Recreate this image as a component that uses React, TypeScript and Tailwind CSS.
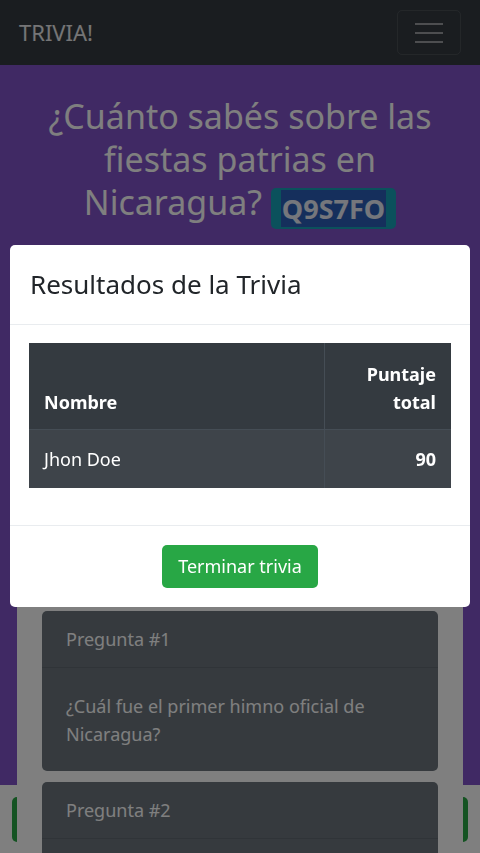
const font = { fontFamily: '"Noto Sans", "Open Sans", sans-serif' };

export default function App() {
  return (
    <div className="relative min-h-[853px] bg-white overflow-hidden" style={font}>
      <nav className="h-[65px] bg-[#343a40] flex items-center justify-between pl-[19px] pr-[19px]">
        <span className="text-[22px] text-white/90">TRIVIA!</span>
        <button className="w-[64px] h-[45px] border border-white/10 rounded-[5px] flex flex-col items-center justify-center gap-[7px]">
          <span className="block w-[28px] h-[2px] bg-white/50" />
          <span className="block w-[28px] h-[2px] bg-white/50" />
          <span className="block w-[28px] h-[2px] bg-white/50" />
        </button>
      </nav>

      <section className="h-[720px] bg-[#8052c8] pt-[30px]">
        <h1 className="text-center text-[34px] leading-[43px] text-white px-[30px]">
          ¿Cuánto sabés sobre las fiestas patrias en Nicaragua?{' '}
          <span className="inline-block bg-[#17a2b8] rounded-[5px] px-[10px] py-[3px] text-[27px] leading-[35px] font-bold align-[-4px] text-white/90">
            <span className="bg-[#2a5fb8] px-[1px]">Q9S7FO</span>
          </span>
        </h1>

        <div className="relative mx-[17px] mt-[357px] bg-white px-[25px] pt-[25px] pb-[40px] flex flex-col gap-[11px]">
          <QuestionCard n={1} text="¿Cuál fue el primer himno oficial de Nicaragua?" />
          <QuestionCard n={2} text="¿En qué año se firmó el Acta de Independencia?" />
        </div>
      </section>

      <div className="px-[12px] pt-[12px]">
        <button className="w-full h-[45px] bg-[#28a745] rounded-[5px] text-white text-[18px]">Siguiente</button>
      </div>

      <div className="fixed inset-0 bg-black/50 z-40" />
      <div className="fixed inset-0 z-50 px-[10px] pt-[245px]">
        <div className="bg-white rounded-[5px] overflow-hidden">
          <div className="h-[80px] flex items-center px-[20px] border-b border-[#e9ecef]">
            <h2 className="text-[26px] text-[#212529]">Resultados de la Trivia</h2>
          </div>
          <div className="px-[19px] pt-[18px] pb-[37px]">
            <div className="grid grid-cols-[296px_1fr] text-white text-[18px] leading-[28px]">
              <div className="bg-[#343a40] px-[15px] pt-[17px] pb-[13px] flex items-end font-bold border-r border-[#454d55]">Nombre</div>
              <div className="bg-[#343a40] px-[15px] pt-[17px] pb-[13px] text-right font-bold">Puntaje<br />total</div>
              <div className="bg-[#3e444a] px-[15px] py-[15px] border-t border-r border-[#454d55]">Jhon Doe</div>
              <div className="bg-[#3e444a] px-[15px] py-[15px] border-t border-[#454d55] text-right font-bold">90</div>
            </div>
          </div>
          <div className="border-t border-[#e9ecef] h-[82px] flex items-center justify-center">
            <button className="h-[43px] px-[16px] bg-[#28a745] rounded-[5px] text-white text-[18px]">Terminar trivia</button>
          </div>
        </div>
      </div>
    </div>
  );
}

function QuestionCard({ n, text }: { n: number; text: string }) {
  return (
    <div className="bg-[#6c757d] rounded-[5px] text-white text-[18px] leading-[28px]">
      <div className="px-[24px] py-[14px] border-b border-black/10">Pregunta #{n}</div>
      <div className="px-[24px] pt-[24px] pb-[23px]">{text}</div>
    </div>
  );
}
